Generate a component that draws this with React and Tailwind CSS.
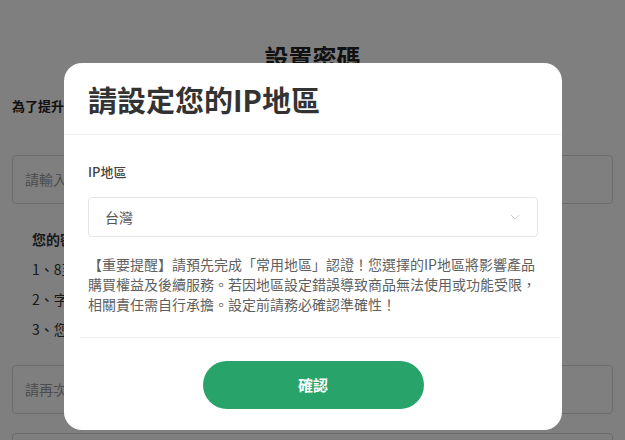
import { FiChevronDown } from "react-icons/fi";

const font = { fontFamily: '"Noto Sans CJK TC", "Noto Sans", sans-serif' };

const rules = [
  "1、8至20個字元，區分大小寫",
  "2、字母、數字及符號至少包含兩種",
  "3、您的密碼不能與帳號相同",
];

export default function App() {
  return (
    <div className="relative h-[440px] w-[625px] overflow-hidden bg-white text-[#333]" style={font}>
      {/* Page behind the dialog */}
      <div className="flex flex-col px-3">
        <h1 className="mt-[42px] text-center text-[24px] font-bold leading-[30px] text-[#222]">設置密碼</h1>
        <p className="mt-[24px] text-[13px] font-bold leading-[20px] text-[#222]">為了提升您的帳號安全，請設置您的登入密碼</p>
        <div className="mt-[39px] flex h-[49px] items-center rounded border border-[#d9d9d9] px-3 text-[14px] text-[#999]">
          請輸入密碼
        </div>
        <div className="mt-[20px] px-5 text-[14px] leading-[30px] text-[#333]">
          <p className="font-bold">您的密碼需符合以下規則：</p>
          {rules.map((r) => (
            <p key={r}>{r}</p>
          ))}
        </div>
        <div className="mt-[21px] flex h-[49px] items-center rounded border border-[#d9d9d9] px-3 text-[14px] text-[#999]">
          請再次輸入密碼
        </div>
        <div className="mt-[19px] h-[49px] rounded border border-[#d9d9d9]" />
      </div>

      {/* Overlay */}
      <div className="absolute inset-0 bg-black/50" />

      {/* Dialog */}
      <div className="absolute left-[64px] top-[63px] flex w-[498px] flex-col rounded-[18px] bg-white">
        <div className="flex h-[72px] items-center border-b border-[#f2f2f2] px-6">
          <h2 className="text-[29px] font-bold leading-[36px] text-[#333]">請設定您的IP地區</h2>
        </div>
        <div className="px-6 pt-[28px]">
          <p className="text-[13px] font-medium leading-[18px] text-[#444]">IP地區</p>
          <div className="mt-[16px] flex h-[40px] items-center justify-between rounded border border-[#e6e6e6] pl-4 pr-[14px]">
            <span className="text-[14px] text-[#555]">台灣</span>
            <FiChevronDown className="text-[#bdbdbd]" size={16} strokeWidth={1.1} />
          </div>
          <p className="mt-[17px] text-[14px] leading-[20px] text-[#5f5f5f]">
            【重要提醒】請預先完成「常用地區」認證！您選擇的IP地區將影響產品購買權益及後續服務。若因地區設定錯誤導致商品無法使用或功能受限，相關責任需自行承擔。設定前請務必確認準確性！
          </p>
        </div>
        <div className="ml-4 mr-0.5 mt-[23px] border-t border-[#f2f2f2]" />
        <div className="flex justify-center pb-[21px] pt-[23px]">
          <button className="h-[48px] w-[221px] rounded-full bg-[#28a46a] text-[15px] font-bold text-white">
            確認
          </button>
        </div>
      </div>
    </div>
  );
}
